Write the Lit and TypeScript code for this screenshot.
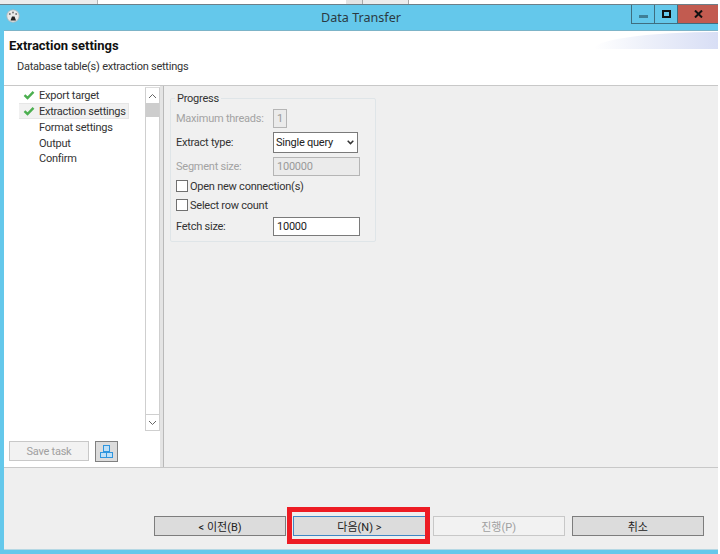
import { LitElement, html, css, svg } from "lit";
import { customElement } from "lit/decorators.js";

const check = svg`<svg width="12" height="10" viewBox="0 0 12 10"><path d="M1.5 5.2 4.5 8 10.5 1.8" fill="none" stroke="#4caf50" stroke-width="2.4"/></svg>`;
const chevUp = svg`<svg width="9" height="6" viewBox="0 0 9 6"><path d="M1 5 4.5 1.5 8 5" fill="none" stroke="#666" stroke-width="1"/></svg>`;
const chevDown = svg`<svg width="9" height="6" viewBox="0 0 9 6"><path d="M1 1 4.5 4.5 8 1" fill="none" stroke="#666" stroke-width="1"/></svg>`;

@customElement("app-root")
export class AppRoot extends LitElement {
  static styles = css`
    :host { display: block; width: 720px; height: 554px; position: relative; overflow: hidden; background: #fff;
      font-family: Roboto, "Noto Sans CJK KR", sans-serif; font-size: 11px; letter-spacing: -0.24px; color: #333; white-space: nowrap; }
    .top { height: 4px; width: 718px; box-sizing: content-box; display: flex; border-bottom: 1px solid #6d7f88; background: #fff; }
    .seg-a { width: 97px; background: #ececec; border-right: 1px solid #b5b5b5; }
    .seg-b { width: 248px; }
    .seg-c { width: 16px; background: #e4e4e4; border-right: 1px solid #a8a8a8; }
    .seg-d { width: 45px; background: #ececec; border-right: 1px solid #a8a8a8; }
    .win { width: 718px; height: 549px; background: #64c8eb; display: flex; flex-direction: column; box-sizing: border-box; padding: 0 0 4px 4px; }
    .title { height: 25px; flex: none; display: flex; align-items: flex-start; position: relative; border-bottom: 1px solid #7cb4c8; box-sizing: content-box; }
    .logo { margin: 4px 0 0 2px; flex: none; }
    .ttext { flex: 1; text-align: center; font-family: "Noto Sans", sans-serif; font-size: 12.6px; letter-spacing: 0; line-height: 25px; color: #2b3a42; padding-right: 16px; }
    .controls { position: absolute; right: 0; top: 0; display: flex; height: 18px; border: 1px solid #3f6e80; border-top: none; border-right: none; }
    .ctl { display: flex; align-items: center; justify-content: center; box-sizing: border-box; height: 18px; }
    .min { width: 23px; border-right: 1px solid #3f6e80; padding-top: 5px; }
    .max { width: 23px; border-right: 1px solid #3f6e80; }
    .close { width: 40px; background: #c25b50; }
    .head { height: 54px; flex: none; background: #fff; border-bottom: 1px solid #c8c8c8; position: relative; box-sizing: content-box; }
    .head h1 { margin: 0; font-size: 13px; font-weight: 700; letter-spacing: 0; color: #111; line-height: 16px; padding: 7px 0 0 5px; }
    .head p { margin: 0; line-height: 16px; padding: 5px 0 0 13px; }
    .swoosh { position: absolute; right: 0; top: 1px; width: 124px; height: 17px; background: linear-gradient(90deg, #fff 0%, #eef1fa 40%, #d8def5 100%); border-top-left-radius: 100% 100%; }
    .main { height: 381px; flex: none; display: flex; border-bottom: 1px solid #c8c8c8; box-sizing: content-box; }
    .left { width: 156px; background: #fff; display: flex; flex-direction: column; flex: none; }
    .tree-wrap { flex: 1; display: flex; min-height: 0; }
    .tree { flex: 1; padding: 1px 0 0 15px; }
    .item { display: flex; align-items: center; height: 16px; width: 110px; box-sizing: border-box; }
    .item:last-child { margin-top: -1px; }
    .item.sel { background: #f1f1f1; border: 1px solid #e6e6e6; border-left-width: 0; }
    .ic { width: 20px; flex: none; display: flex; align-items: center; padding-left: 4px; box-sizing: border-box; }
    .sb { width: 15px; flex: none; border: 1px solid #cfcfcf; border-top: 1px solid #dcdcdc; box-sizing: border-box; margin-top: 1px; display: flex; flex-direction: column; background: #fff; }
    .sb-btn { height: 15px; display: flex; align-items: center; justify-content: center; flex: none; }
    .thumb { height: 14px; background: #cdcdcd; flex: none; }
    .sb-fill { flex: 1; }
    .sb-btn.down { border-top: 1px solid #cfcfcf; }
    .tools { height: 36px; flex: none; display: flex; align-items: flex-start; gap: 6px; padding: 10px 0 0 5px; box-sizing: border-box; }
    .save { width: 80px; height: 20px; box-sizing: border-box; border: 1px solid #c8c8c8; background: #f2f2f2; color: #a0a0a0; display: flex; align-items: center; justify-content: center; }
    .icbtn { width: 23px; height: 21px; box-sizing: border-box; border: 1px solid #808080; background: #dcdcdc; display: flex; align-items: center; justify-content: center; }
    .sash { width: 3px; flex: none; background: #e4e4e4; border-right: 1px solid #b9b9b9; box-sizing: content-box; }
    .right { flex: 1; background: #efefef; padding: 4px 0 0 6px; }
    fieldset { margin: 0; width: 206px; height: 152px; box-sizing: border-box; border: 1px solid #dfe5e8; border-radius: 2px; padding: 0 0 0 5px; min-inline-size: 0; background: #f0f0f0; }
    legend { padding: 2px 2px 0; margin-left: -1px; line-height: 14px; }
    .form { display: flex; flex-direction: column; }
    .row { display: flex; align-items: center; }
    .r1 { height: 24px; }
    .r2 { height: 24px; }
    .r3 { height: 24px; }
    .r4 { height: 18px; margin-top: -1px; }
    .r5 { height: 20px; }
    .r6 { height: 22px; }
    .lab { width: 97px; flex: none; }
    .dis { color: #a3a3a3; }
    .box { box-sizing: border-box; height: 19px; display: flex; align-items: center; padding-left: 3px; }
    .ro { border: 1px solid #b5b5b5; background: #ebebeb; color: #9a9a9a; }
    .ed { border: 1px solid #7a7a7a; background: #fff; width: 87px; color: #222; }
    .one { width: 14px; padding-left: 3px; }
    .seg { width: 87px; }
    .sel2 { width: 85px; height: 21px; border: 1px solid #7a7a7a; background: #fff; color: #222; justify-content: space-between; padding: 0 3px 0 2px; }
    .cb { width: 12px; height: 12px; box-sizing: border-box; border: 1px solid #707070; background: #fff; margin-right: 2px; flex: none; }
    .foot { flex: 1; background: #efefef; display: flex; justify-content: flex-end; align-items: flex-end; gap: 7px; padding: 0 14px 13px 0; border-bottom: 1px solid #b5d8e4; box-sizing: border-box; }
    .btn { width: 132.25px; height: 20px; box-sizing: border-box; border: 1px solid #7d7d7d; background: #dcdcdc; color: #222; display: flex; align-items: center; justify-content: center; font-size: 11px; letter-spacing: 0; }
    .btn.focus { border-color: #3f88c5; }
    .btn.off { border-color: #c8c8c8; background: #f2f2f2; color: #a0a0a0; }
    .mark { position: absolute; left: 287px; top: 507px; width: 143px; height: 37px; box-sizing: border-box; border: 5px solid #ed1c24; }
  `;

  render() {
    const items = [
      ["Export target", true, false],
      ["Extraction settings", true, true],
      ["Format settings", false, false],
      ["Output", false, false],
      ["Confirm", false, false],
    ] as const;
    return html`
      <div class="top"><div class="seg-a"></div><div class="seg-b"></div><div class="seg-c"></div><div class="seg-d"></div></div>
      <div class="win">
        <div class="title">
          <svg class="logo" width="14" height="14" viewBox="0 0 14 14"><circle cx="7" cy="7" r="6.2" fill="#e9e9e9" stroke="#a9b4b8" stroke-width=".8"/><path d="M4.5 11.5 6 7.5 8.5 7.5 10 11.5Z" fill="#222"/><circle cx="3.8" cy="5" r="1" fill="#777"/><circle cx="7" cy="3.4" r="1" fill="#777"/><circle cx="10.2" cy="5" r="1" fill="#777"/></svg>
          <div class="ttext">Data Transfer</div>
          <div class="controls">
            <div class="ctl min"><svg width="9" height="3" viewBox="0 0 9 3"><rect width="9" height="3" fill="#3f7f96"/></svg></div>
            <div class="ctl max"><svg width="9" height="8" viewBox="0 0 9 8"><rect x="1" y="1" width="7" height="6" fill="none" stroke="#111" stroke-width="2"/></svg></div>
            <div class="ctl close"><svg width="9" height="8" viewBox="0 0 9 8"><path d="M1 .5 8 7.5M8 .5 1 7.5" stroke="#111" stroke-width="2"/></svg></div>
          </div>
        </div>
        <div class="head">
          <div class="swoosh"></div>
          <h1>Extraction settings</h1>
          <p>Database table(s) extraction settings</p>
        </div>
        <div class="main">
          <div class="left">
            <div class="tree-wrap">
              <div class="tree">
                ${items.map(([t, c, s]) => html`<div class="item ${s ? "sel" : ""}"><span class="ic">${c ? check : ""}</span>${t}</div>`)}
              </div>
              <div class="sb">
                <div class="sb-btn">${chevUp}</div>
                <div class="thumb"></div>
                <div class="sb-fill"></div>
                <div class="sb-btn down">${chevDown}</div>
              </div>
            </div>
            <div class="tools">
              <div class="save">Save task</div>
              <div class="icbtn"><svg width="15" height="15" viewBox="0 0 15 15" fill="#bfe0f7" stroke="#2f95de"><rect x="4.5" y="1.5" width="6" height="6"/><rect x="1.5" y="8.5" width="6" height="5"/><rect x="7.5" y="8.5" width="6" height="5"/></svg></div>
            </div>
          </div>
          <div class="sash"></div>
          <div class="right">
            <fieldset>
              <legend>Progress</legend>
              <div class="form">
                <div class="row r1"><span class="lab dis">Maximum threads:</span><span class="box ro one">1</span></div>
                <div class="row r2"><span class="lab">Extract type:</span><span class="box sel2">Single query ${html`<svg width="7" height="5" viewBox="0 0 7 5"><path d="M.7.8 3.5 3.6 6.3.8" fill="none" stroke="#333" stroke-width="1.5"/></svg>`}</span></div>
                <div class="row r3"><span class="lab dis">Segment size:</span><span class="box ro seg">100000</span></div>
                <div class="row r4"><span class="cb"></span>Open new connection(s)</div>
                <div class="row r5"><span class="cb"></span>Select row count</div>
                <div class="row r6"><span class="lab">Fetch size:</span><span class="box ed">10000</span></div>
              </div>
            </fieldset>
          </div>
        </div>
        <div class="foot">
          <div class="btn">&lt; 이전(B)</div>
          <div class="btn focus">다음(N) &gt;</div>
          <div class="btn off">진행(P)</div>
          <div class="btn">취소</div>
        </div>
      </div>
      <div class="mark"></div>
    `;
  }
}
